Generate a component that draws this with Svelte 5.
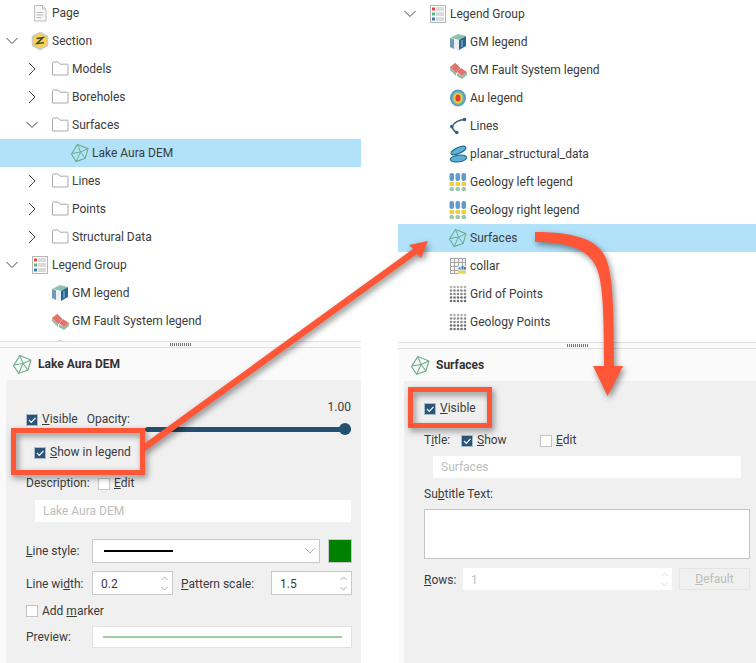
<script>
  const leftTree = [
    { label: 'Page', level: 0, icon: 'page' },
    { label: 'Section', level: 0, icon: 'section', chev: 'down' },
    { label: 'Models', level: 1, icon: 'folder', chev: 'right' },
    { label: 'Boreholes', level: 1, icon: 'folder', chev: 'right' },
    { label: 'Surfaces', level: 1, icon: 'folder', chev: 'down' },
    { label: 'Lake Aura DEM', level: 2, icon: 'mesh', selected: true },
    { label: 'Lines', level: 1, icon: 'folder', chev: 'right' },
    { label: 'Points', level: 1, icon: 'folder', chev: 'right' },
    { label: 'Structural Data', level: 1, icon: 'folder', chev: 'right' },
    { label: 'Legend Group', level: 0, icon: 'legend', chev: 'down' },
    { label: 'GM legend', level: 1, icon: 'cube' },
    { label: 'GM Fault System legend', level: 1, icon: 'fault' },
    { label: '', level: 1, icon: 'au' }
  ];
  const rightTree = [
    { label: 'Legend Group', level: 0, icon: 'legend', chev: 'down' },
    { label: 'GM legend', level: 1, icon: 'cube' },
    { label: 'GM Fault System legend', level: 1, icon: 'fault' },
    { label: 'Au legend', level: 1, icon: 'au' },
    { label: 'Lines', level: 1, icon: 'lines' },
    { label: 'planar_structural_data', level: 1, icon: 'planar' },
    { label: 'Geology left legend', level: 1, icon: 'geology' },
    { label: 'Geology right legend', level: 1, icon: 'geology' },
    { label: 'Surfaces', level: 1, icon: 'mesh', selected: true },
    { label: 'collar', level: 1, icon: 'table' },
    { label: 'Grid of Points', level: 1, icon: 'dots' },
    { label: 'Geology Points', level: 1, icon: 'dots' }
  ];
  const dotGrid = [];
  for (let y = 0; y < 5; y++) for (let x = 0; x < 5; x++) dotGrid.push([3 + x * 3.5, 3 + y * 3.5, y]);
  const cols = [2, 8, 14];
</script>

{#snippet icon(name)}
  <svg class="ico" viewBox="0 0 20 20" aria-hidden="true">
    {#if name === 'page'}
      <path d="M4.500 2.500h8l3.500 3.500v12h-11.500z" fill="#f7f7f7" stroke="#bdbdbd"/>
      <path d="M12.500 2.500v3.500h3.500M6.500 9.500h7M6.500 12h7M6.500 14.500h5" fill="none" stroke="#bdbdbd"/>
    {:else if name === 'section'}
      <path d="M10 1.500l7.500 4v9l-7.500 4-7.500-4v-9z" fill="#f9d34f" stroke="#c9c9c9" stroke-width="1.500"/>
      <path d="M6.500 7.500l6.500-.8-6 5.800 7-.8" fill="none" stroke="#4b4b3a" stroke-width="1.600"/>
    {:else if name === 'folder'}
      <path d="M2.500 4.500q0-1.500 1.500-1.500h4l2 2.200h7.500q.5 0 .5 1v9.800h-15.500z" fill="#fff" stroke="#a9a9a9"/>
    {:else if name === 'mesh'}
      <path d="M7.500 1.500l10.500 4.200-2.800 9.600-9 3.200-4.700-7.500z" fill="none" stroke="#6dae8d" stroke-width="1.100"/>
      <path d="M7.500 1.500l3 7.500 7.500-3.300M10.500 9l-8.500 1.500M10.500 9l4.700 6.300M10.500 9l-4.300 9.500" fill="none" stroke="#6dae8d" stroke-width="1"/>
    {:else if name === 'legend'}
      <rect x="2.500" y="1.500" width="15" height="17" fill="#fff" stroke="#b5b5b5"/>
      <rect x="4" y="3.500" width="3" height="3" fill="#e2453f"/><rect x="4" y="8.500" width="3" height="3" fill="#5bb37c"/><rect x="4" y="13.500" width="3" height="3" fill="#2f7fbe"/>
      <path d="M8 4h8M8 6h8M8 9h8M8 11h8M8 14h8M8 16h8" stroke="#b7b7b7"/>
    {:else if name === 'cube'}
      <path d="M2 6l8-4 8 2-7 4z" fill="#8fc2ab"/>
      <path d="M11 8l7-4v10l-7 4z" fill="#2b6690"/>
      <path d="M2 6l4 1.500v9.500l-4-2z" fill="#6f9bb5"/><path d="M6 7.500l5 .5v10l-5-1z" fill="#e9eef1"/>
      <path d="M14 8v7" stroke="#9cc0d6"/>
    {:else if name === 'fault'}
      <path d="M2 7v3l6 6v-3zM9 13v3l5 3v-3zM14 16l5-4v3l-5 4z" fill="#8fbda3"/>
      <path d="M2 7l5-4 5 5-4 5z" fill="#e8716c"/>
      <path d="M9 12l4-4 6 4-5 4z" fill="#e8716c"/>
      <path d="M7 3l5 5-4 5" stroke="#c98a86" fill="none"/>
    {:else if name === 'au'}
      <ellipse cx="10" cy="10" rx="8" ry="8.500" fill="#5c9cc4"/>
      <ellipse cx="10" cy="10" rx="5.800" ry="6.800" fill="#7ec0a0"/>
      <ellipse cx="10" cy="10" rx="4.300" ry="5.200" fill="#f4c93a"/>
      <ellipse cx="10" cy="10" rx="2.600" ry="3.600" fill="#e2402e"/>
    {:else if name === 'lines'}
      <path d="M16.500 3.500c-5 .5-10 2.500-12.500 7 .5 2.500 2 4.500 4.500 6" fill="none" stroke="#2d5f80" stroke-width="1.300"/>
      <circle cx="16.500" cy="3.500" r="1.800" fill="#2d5f80"/><circle cx="3.800" cy="10.500" r="1.800" fill="#2d5f80"/><circle cx="8.800" cy="16.500" r="1.800" fill="#2d5f80"/>
    {:else if name === 'planar'}
      <ellipse cx="10.500" cy="6.500" rx="8" ry="3" transform="rotate(-24 10.500 6.500)" fill="#5cb1d4" stroke="#1f6487"/>
      <ellipse cx="10.500" cy="14.500" rx="8.300" ry="3.400" transform="rotate(-8 10.500 14.500)" fill="#5cb1d4" stroke="#1f6487"/>
    {:else if name === 'geology'}
      {#each cols as x}
        <rect x={x - 0.5} y="1" width="4.500" height="8" rx="2" fill="#5f9bcf"/>
        <rect x={x - 0.5} y="10" width="4.500" height="4" fill="#f5d033"/>
        <rect x={x - 0.5} y="15" width="4.500" height="4" rx="1.500" fill="#9cc9a8"/>
      {/each}
    {:else if name === 'table'}
      <rect x="2" y="2" width="16" height="16" fill="#a6a6a6"/>
      <path d="M3 3h3v3H3zM7 3h3v3H7zM11 3h3v3h-3zM15 3h2v3h-2zM3 7h3v3H3zM7 7h3v3H7zM11 7h3v3h-3zM15 7h2v3h-2zM3 11h3v3H3zM7 11h3v3H7zM3 15h3v2H3zM7 15h3v2H7z" fill="#f4f4f4"/>
      <rect x="10" y="10" width="8" height="8" fill="#e8eef2"/>
      <path d="M10.500 13.500v-2h2v2zM13.500 13.500v-3.500h2v3.500zM16 13.500v-2.500h2v2.500z" fill="#3f7fb5"/>
      <rect x="10" y="14.500" width="8" height="3" fill="#ecd250"/>
    {:else if name === 'dots'}
      {#each dotGrid as d}
        <circle cx={d[0]} cy={d[1]} r="1.300" fill={d[2] > 2 ? '#6f6f6f' : d[2] > 0 ? '#8c8c8c' : '#b0b0b0'}/>
      {/each}
    {/if}
  </svg>
{/snippet}

{#snippet tree(rows)}
  {#each rows as r}
    <div class="row" class:selected={r.selected} style="padding-left:{r.level * 20}px">
      <span class="chev">
        {#if r.chev === 'down'}
          <svg width="14" height="14" viewBox="0 0 14 14"><path d="M1.500 4l5.500 5.500L12.500 4" fill="none" stroke="#444"/></svg>
        {:else if r.chev === 'right'}
          <svg width="14" height="14" viewBox="0 0 14 14"><path d="M4 1l6 6-6 6" fill="none" stroke="#444"/></svg>
        {/if}
      </span>
      {@render icon(r.icon)}
      {#if r.label}<span class="lbl">{r.label}</span>{/if}
    </div>
  {/each}
{/snippet}

{#snippet check(on)}
  <span class="cb" class:on>
    {#if on}<svg width="12" height="12" viewBox="0 0 12 12"><path d="M3 6l2.300 2.300L9.500 3.800" fill="none" stroke="#fff" stroke-width="1.200"/></svg>{/if}
  </span>
{/snippet}

{#snippet splitter()}
  <div class="splitter"><span class="grip"></span></div>
{/snippet}

{#snippet head(title)}
  <div class="head">{@render icon('mesh')}<strong>{title}</strong></div>
{/snippet}

{#snippet spin(light)}
  <svg class="spinner" width="9" height="17" viewBox="0 0 9 17"><path d="M1.500 5L4.500 2l3 3M1.500 12l3 3 3-3" fill="none" stroke={light ? '#ddd' : '#aaa'}/></svg>
{/snippet}

<div class="page">
  <section class="col left">
    <div class="tree t-left"><div class="shift">{@render tree(leftTree)}</div></div>
    {@render splitter()}
    <div class="panel">
      {@render head('Lake Aura DEM')}
      <div class="body lb">
        <div class="top">
          <div class="top-a">
            <div class="line vis">{@render check(true)}<span><u>V</u>isible</span><span class="op">Opacity:</span></div>
            <div class="line show">{@render check(true)}<span><u>S</u>how in legend</span></div>
          </div>
          <div class="top-b">
            <div class="val">1.00</div>
            <div class="slider"><span class="knob"></span></div>
          </div>
        </div>
        <div class="line desc"><span class="dlabel">Description:</span>{@render check(false)}<span><u>E</u>dit</span></div>
        <div class="input in1">Lake Aura DEM</div>
        <div class="line ls">
          <span class="flabel"><u>L</u>ine style:</span>
          <div class="select">
            <span class="stroke"></span>
            <svg width="12" height="8" viewBox="0 0 12 8"><path d="M1.500 1.500L6 6l4.500-4.500" fill="none" stroke="#aaa"/></svg>
          </div>
          <span class="swatch"></span>
        </div>
        <div class="line lw">
          <span class="flabel nudge">Line wi<u>d</u>th:</span>
          <div class="num"><span class="nudge">0.2</span>{@render spin(false)}</div>
          <span class="plabel nudge"><u>P</u>attern scale:</span>
          <div class="num"><span class="nudge">1.5</span>{@render spin(false)}</div>
        </div>
        <div class="line mk">{@render check(false)}<span class="nudge">Add <u>m</u>arker</span></div>
        <div class="line pv">
          <span class="flabel">Preview:</span>
          <div class="preview"><span></span></div>
        </div>
      </div>
    </div>
  </section>

  <section class="col right">
    <div class="tree t-right">{@render tree(rightTree)}</div>
    {@render splitter()}
    <div class="panel">
      {@render head('Surfaces')}
      <div class="body rb">
        <div class="line rvis">{@render check(true)}<span><u>V</u>isible</span></div>
        <div class="line rtitle">
          <span class="tlabel">T<u>i</u>tle:</span>{@render check(true)}<span class="show-l"><u>S</u>how</span>{@render check(false)}<span><u>E</u>dit</span>
        </div>
        <div class="input in2">Surfaces</div>
        <div class="line rsub">Su<u>b</u>title Text:</div>
        <div class="area"></div>
        <div class="line rrows">
          <span class="rlabel nudge"><u>R</u>ows:</span>
          <div class="num dis"><span class="nudge">1</span>{@render spin(true)}</div>
          <div class="btn"><u>D</u>efault</div>
        </div>
      </div>
    </div>
  </section>

  <div class="callouts" aria-hidden="true">
    <svg width="756" height="663" viewBox="0 0 756 663">
      <rect x="13.500" y="430.500" width="129" height="42" fill="none" stroke="#ff5638" stroke-width="5"/>
      <rect x="410.500" y="389.500" width="79" height="36" fill="none" stroke="#ff5638" stroke-width="5"/>
      <path d="M141 446L413 249l-4-4 19-4-7 17-4-4L145 451z" fill="#ff5638"/>
      <path d="M535 232C565 232 588 236 600 249C612 262 614 290 614 366H623L607.500 396L593 366H604C604 300 602 275 594 263C585 248 565 242 535 242z" fill="#ff5638"/>
    </svg>
  </div>
</div>

<style>
  :global(body) { margin: 0; background: #fff; }
  .page {
    position: relative; width: 756px; height: 663px; overflow: hidden; display: flex; gap: 37px;
    font: 12px/15px Roboto, "Liberation Sans", sans-serif; color: #3b3b3b; background: #fff;
  }
  .col { display: flex; flex-direction: column; height: 663px; min-width: 0; }
  .left { width: 361px; }
  .right { width: 358px; }
  .tree { overflow: hidden; flex: none; }
  .t-left { height: 341px; }
  .shift { margin-top: -1px; }
  .t-right { height: 342px; }
  .row { display: flex; align-items: center; height: 28px; }
  .row.selected { background: #b2e2fa; }
  .chev { width: 24px; height: 28px; flex: none; display: flex; align-items: center; justify-content: center; }
  .ico { width: 20px; height: 20px; flex: none; margin-left: 6px; }
  .lbl { margin-left: 2px; white-space: nowrap; }
  .splitter {
    flex: none; height: 5px; border-top: 1px solid #e0e0e0; border-bottom: 1px solid #e0e0e0;
    display: flex; align-items: center; justify-content: center; background: #fafafa;
  }
  .grip {
    width: 21px; height: 3px;
    background: repeating-linear-gradient(90deg, #777 0 1px, transparent 1px 2px);
  }
  .panel { flex: 1; display: flex; flex-direction: column; background: #fafafa; min-height: 0; }
  .head { flex: none; height: 32px; display: flex; align-items: center; padding-left: 6px; }
  .head .ico { width: 21px; height: 21px; }
  .head strong { margin-left: 5px; font-weight: 700; color: #333; }
  .body { flex: 1; margin-left: 6px; background: #f0f0f0; position: relative; }
  .line { display: flex; align-items: center; height: 15px; white-space: nowrap; }
  .nudge { padding-top: 2px; }
  .cb {
    width: 12px; height: 12px; box-sizing: border-box; flex: none; display: block; background: #fff;
    border: 1px solid #c4c4c4; margin-right: 4px;
  }
  .cb.on { background: #2a5578; border-color: #a9bccb; }
  .cb svg { display: block; margin: -1px; }

  .lb { padding-left: 20px; }
  .top { display: flex; height: 81px; }
  .top-a { width: 119px; padding-top: 32px; box-sizing: border-box; }
  .op { margin-left: 9px; }
  .show { margin: 18px 0 0 8px; }
  .top-b { width: 206px; padding-top: 20px; box-sizing: border-box; }
  .val { height: 14px; text-align: right; }
  .slider { position: relative; margin-top: 12.500px; height: 5px; border-radius: 3px; background: #24506f; }
  .knob { position: absolute; right: 0; top: -3.500px; width: 12px; height: 12px; border-radius: 50%; background: #24506f; }
  .desc { margin-top: 15px; }
  .dlabel { width: 72px; flex: none; }
  .input {
    height: 22px; line-height: 22px; background: #fff; color: #bdbdbd; padding-left: 8px; box-sizing: border-box;
  }
  .in1 { margin: 9px 0 0 9px; width: 316px; }
  .ls { margin-top: 17px; height: 24px; }
  .flabel { width: 66px; flex: none; }
  .select {
    width: 228px; height: 24px; box-sizing: border-box; background: #fff; border: 1px solid #c8c8c8;
    display: flex; align-items: center; justify-content: space-between; padding: 0 3px 0 11px;
  }
  .stroke { width: 69px; height: 2px; background: #000; }
  .swatch { width: 24px; height: 24px; box-sizing: border-box; margin-left: 8px; background: #008000; border: 1px solid #c8c8c8; }
  .lw { margin-top: 8px; height: 24px; }
  .num {
    width: 81px; height: 24px; box-sizing: border-box; background: #fff; border: 1px solid #c8c8c8;
    padding-left: 8px; display: flex; align-items: center; justify-content: space-between; padding-right: 3px;
  }
  .plabel { margin-left: 8px; width: 90px; flex: none; }
  .mk { margin-top: 8px; }
  .pv { margin-top: 8px; height: 22px; }
  .preview {
    width: 260px; height: 22px; box-sizing: border-box; background: #fff; border: 1px solid #e2e2e2;
    display: flex; align-items: center; padding: 0 9px 0 10px;
  }
  .preview span { flex: 1; height: 2px; background: #9fce9d; }

  .rb { padding-left: 20px; }
  .rvis { padding-top: 20px; }
  .rtitle { margin-top: 17px; }
  .tlabel { width: 37px; flex: none; }
  .show-l { width: 63px; flex: none; }
  .in2 { margin: 8px 0 0 9px; width: 308px; }
  .rsub { margin-top: 9px; }
  .area { margin-top: 7px; width: 326px; height: 50px; box-sizing: border-box; background: #fff; border: 1px solid #c4c4c4; }
  .rrows { margin-top: 9px; height: 22px; }
  .rlabel { width: 39px; flex: none; }
  .num.dis { width: 209px; height: 22px; border: 0; color: #bdbdbd; }
  .btn {
    width: 71px; height: 22px; box-sizing: border-box; margin-left: 7px; border: 1px solid #e4e4e4;
    background: #f0f0f0; color: #bdbdbd; text-align: center; line-height: 20px;
  }

  .callouts { position: absolute; inset: 0; pointer-events: none; }
  .callouts svg { display: block; filter: drop-shadow(2px 3px 3px rgba(0, 0, 0, .45)); }
</style>
